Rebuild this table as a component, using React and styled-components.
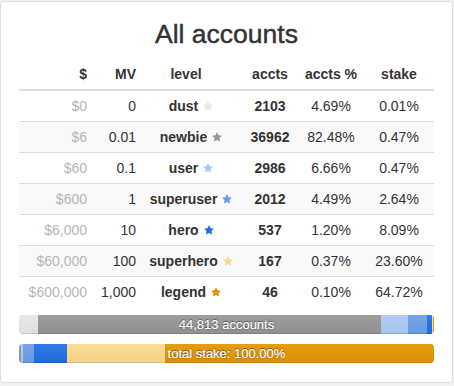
import React from "react";
import styled, { createGlobalStyle } from "styled-components";

const GlobalStyle = createGlobalStyle`
  html, body { margin: 0; padding: 0; }
  body {
    background: #f2f2f2;
    font-family: "Liberation Sans", Arial, Helvetica, sans-serif;
    color: #333;
    font-size: 14px;
  }
`;

const Panel = styled.div`
  box-sizing: border-box;
  width: 453px;
  margin-top: 1px;
  background: #fff;
  border: 1px solid #dedede;
  border-radius: 4px;
  padding: 17px 18px 19px 18px;
`;

const Title = styled.h3`
  margin: 0 0 10px 0;
  font-size: 26.5px;
  line-height: 30px;
  font-weight: 400;
  text-align: center;
  color: #333;
  -webkit-text-stroke: 0.45px #333;
`;

const Table = styled.table`
  width: 415px;
  border-collapse: separate;
  border-spacing: 0;
  table-layout: fixed;
  margin-bottom: 8px;
`;

const Th = styled.th`
  padding: 5px ${(p) => p.$padRight || 5}px 5px 5px;
  height: 20px;
  line-height: 20px;
  font-size: 14px;
  font-weight: 700;
  text-align: ${(p) => p.$align || "center"};
  border-bottom: 2px solid #ddd;
  white-space: nowrap;
`;

const Row = styled.tr`
  background: ${(p) => (p.$striped ? "#f9f9f9" : "transparent")};
`;

const Td = styled.td`
  box-sizing: content-box;
  padding: 5px;
  height: 20px;
  line-height: 20px;
  font-size: 14px;
  white-space: nowrap;
  text-align: ${(p) => p.$align || "center"};
  font-weight: ${(p) => (p.$bold ? 700 : 400)};
  color: ${(p) => (p.$muted ? "#b5b5b5" : "#333")};
  border-top: ${(p) => (p.$sep ? "1px solid #ddd" : "0")};
`;

const Star = styled.svg`
  width: 12px;
  height: 12px;
  margin-left: 4px;
  vertical-align: -1px;
  fill: ${(p) => p.$color};
`;

const Progress = styled.div`
  position: relative;
  display: flex;
  height: 19px;
  overflow: hidden;
  background: #f5f5f5;
  border-radius: 4px;
  box-shadow: inset 0 1px 2px rgba(0, 0, 0, 0.1);
  margin-bottom: ${(p) => (p.$last ? 0 : 10)}px;
`;

const Segment = styled.div`
  flex: none;
  height: 100%;
  background: ${(p) => p.$color};
  background-image: linear-gradient(to bottom, rgba(255,255,255,0.08), rgba(0,0,0,0.03));
  box-shadow: inset 0 -1px 0 rgba(0, 0, 0, 0.12);
`;

const BarLabel = styled.div`
  position: absolute;
  inset: 0;
  text-align: center;
  color: #fff;
  font-size: 13px;
  line-height: 19px;
  -webkit-text-stroke: 0.2px #fff;
  text-shadow: 0 0 2px rgba(0, 0, 0, 0.55), 0 -1px 0 rgba(0, 0, 0, 0.3);
  white-space: nowrap;
`;

const rows = [
  { usd: "$0", mv: "0", level: "dust", accts: "2103", pct: 4.69, stake: 0.01, color: "#e9e9e9" },
  { usd: "$6", mv: "0.01", level: "newbie", accts: "36962", pct: 82.48, stake: 0.47, color: "#999999" },
  { usd: "$60", mv: "0.1", level: "user", accts: "2986", pct: 6.66, stake: 0.47, color: "#abc9f3" },
  { usd: "$600", mv: "1", level: "superuser", accts: "2012", pct: 4.49, stake: 2.64, color: "#6b9de6" },
  { usd: "$6,000", mv: "10", level: "hero", accts: "537", pct: 1.2, stake: 8.09, color: "#1f6ee3" },
  { usd: "$60,000", mv: "100", level: "superhero", accts: "167", pct: 0.37, stake: 23.6, color: "#fcd98b" },
  { usd: "$600,000", mv: "1,000", level: "legend", accts: "46", pct: 0.1, stake: 64.72, color: "#e39400" },
];

const segColor = (c, i) => (i === 0 ? "#e6e6e6" : i === 1 ? "#959595" : c);

function StarIcon({ color }) {
  return (
    <Star $color={color} viewBox="0 0 24 24" aria-hidden="true">
      <path d="M12 2l3.09 6.26L22 9.27l-5 4.87 1.18 6.88L12 17.77l-6.18 3.25L7 14.14 2 9.27l6.91-1.01L12 2z" />
    </Star>
  );
}

export default function App() {
  return (
    <>
      <GlobalStyle />
      <Panel>
        <Title>All accounts</Title>
        <Table>
          <colgroup>
            <col style={{ width: 73 }} />
            <col style={{ width: 49 }} />
            <col style={{ width: 101 }} />
            <col style={{ width: 56 }} />
            <col style={{ width: 66 }} />
            <col style={{ width: 70 }} />
          </colgroup>
          <thead>
            <tr>
              <Th $align="right">$</Th>
              <Th $align="right">MV</Th>
              <Th $padRight={16}>level</Th>
              <Th>accts</Th>
              <Th>accts %</Th>
              <Th>stake</Th>
            </tr>
          </thead>
          <tbody>
            {rows.map((r, i) => {
              const sep = i > 0;
              return (
                <Row key={r.level} $striped={i % 2 === 1}>
                  <Td $sep={sep} $align="right" $muted>{r.usd}</Td>
                  <Td $sep={sep} $align="right">{r.mv}</Td>
                  <Td $sep={sep} $bold>
                    {r.level}
                    <StarIcon color={r.color} />
                  </Td>
                  <Td $sep={sep} $bold>{r.accts}</Td>
                  <Td $sep={sep}>{r.pct.toFixed(2)}%</Td>
                  <Td $sep={sep}>{r.stake.toFixed(2)}%</Td>
                </Row>
              );
            })}
          </tbody>
        </Table>
        <Progress>
          {rows.map((r, i) => (
            <Segment key={r.level} $color={segColor(r.color, i)} style={{ width: `${r.pct}%` }} />
          ))}
          <BarLabel>44,813 accounts</BarLabel>
        </Progress>
        <Progress $last>
          {rows.map((r, i) => (
            <Segment key={r.level} $color={segColor(r.color, i)} style={{ width: `${r.stake}%` }} />
          ))}
          <BarLabel>total stake: 100.00%</BarLabel>
        </Progress>
      </Panel>
    </>
  );
}
